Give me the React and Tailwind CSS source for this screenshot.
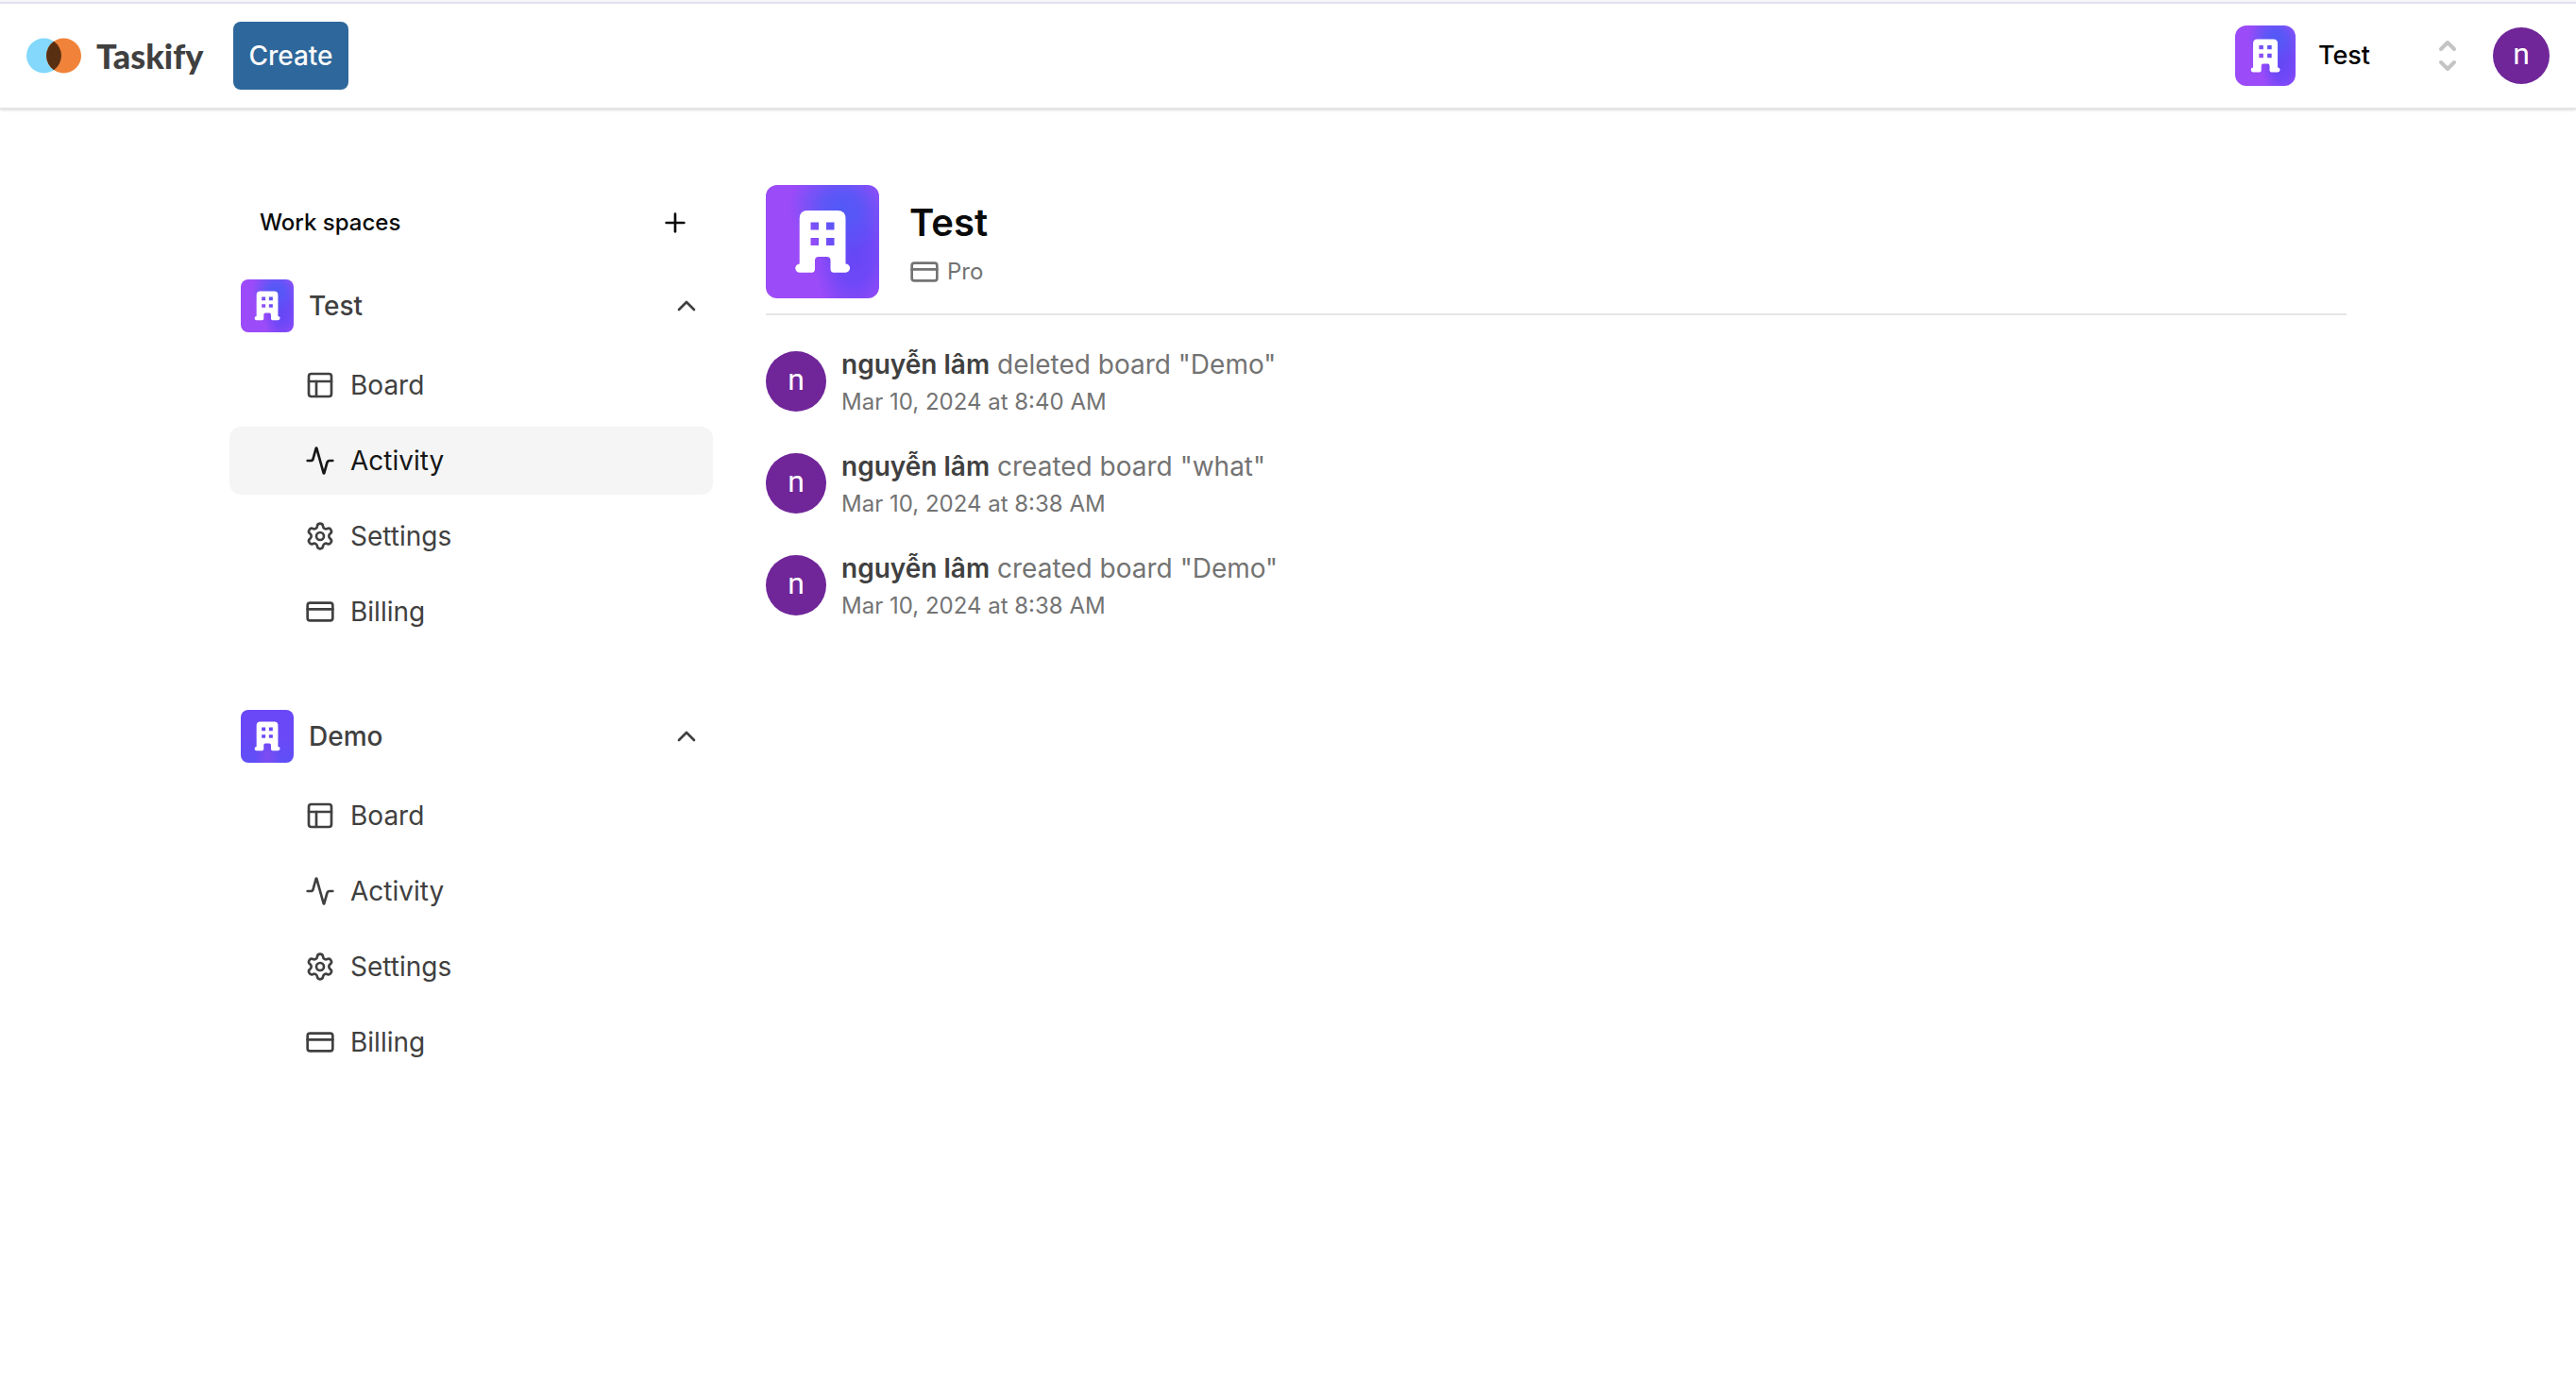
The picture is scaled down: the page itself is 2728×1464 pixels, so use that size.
import { Layout, Activity, Settings, CreditCard, Plus, ChevronUp } from "lucide-react";

const GRADIENTS = {
  Test: "bg-[radial-gradient(ellipse_45%_42%_at_66%_20%,#5159f6_0%,#5159f6cc_35%,#5159f600_100%),radial-gradient(ellipse_36%_60%_at_78%_60%,#6447f6_0%,#6447f6cc_45%,#6c47f600_100%),linear-gradient(#9b4bf8,#9b4bf8)]",
  Demo: "bg-[radial-gradient(ellipse_at_50%_90%,#7e4df2_0%,#7e4df200_35%),linear-gradient(180deg,#6a48f7_50%,#5f4ff7_100%)]",
};

function OrgLogo({ name, className }) {
  return (
    <span className={`block shrink-0 overflow-hidden ${GRADIENTS[name]} ${className}`}>
      <svg viewBox="0 0 120 120" className="size-full" fill="#fff" aria-hidden="true">
        <path
          fillRule="evenodd"
          d="M44 27H76Q84.500 27 84.500 35.500V83.500A4.600 4.600 0 0 1 84.500 92.700H72Q68.500 92.700 68.500 89V80Q68.500 76 64.500 76H56Q52 76 52 80V89Q52 92.700 48.500 92.700H36A4.600 4.600 0 0 1 35.700 83.500V35.500Q35.700 27 44 27ZM47.500 39.500V47.500H56V39.500ZM64 39.500V47.500H72.500V39.500ZM47.500 56V64H56V56ZM64 56V64H72.500V56Z"
        />
      </svg>
    </span>
  );
}

function Avatar({ className }) {
  return (
    <span
      className={`flex shrink-0 items-center justify-center rounded-full bg-[#702699] pb-1 font-[Roboto,sans-serif] text-[32px] leading-none text-white ${className}`}
    >
      n
    </span>
  );
}

const LINKS = [
  ["Board", Layout],
  ["Activity", Activity],
  ["Settings", Settings],
  ["Billing", CreditCard],
];

function Workspace({ name, active }) {
  return (
    <section>
      <button type="button" aria-expanded="true" className="flex h-[72px] w-full items-center gap-4 px-3 text-neutral-700">
        <OrgLogo name={name} className="size-14 rounded-lg" />
        <span className="grow text-left font-medium">{name}</span>
        <ChevronUp className="size-8" />
      </button>
      <ul className="flex flex-col gap-2 pt-3">
        {LINKS.map(([label, Icon]) => (
          <li key={label}>
            <a
              href="#"
              className={`flex h-[72px] items-center gap-4 rounded-xl pl-20 ${
                label === active ? "bg-neutral-100 text-neutral-900" : "text-neutral-700"
              }`}
            >
              <Icon className="size-8" />
              {label}
            </a>
          </li>
        ))}
      </ul>
    </section>
  );
}

const ENTRIES = [
  ['deleted board "Demo"', "Mar 10, 2024 at 8:40 AM"],
  ['created board "what"', "Mar 10, 2024 at 8:38 AM"],
  ['created board "Demo"', "Mar 10, 2024 at 8:38 AM"],
];

export default function App() {
  return (
    <div className="min-h-screen border-t-2 border-[#f8f5fb] bg-white font-[Inter,sans-serif] text-[28px] leading-10 text-neutral-950">
      <header className="flex h-[114px] items-center border-t-2 border-b-2 border-t-[#e3e1ee] border-b-neutral-200 px-7 shadow-sm">
        <a href="#" className="flex items-center gap-4 text-neutral-700">
          <svg viewBox="0 0 58 38" className="h-[38px] w-[58px]" aria-hidden="true">
            <circle cx="18.500" cy="19" r="18.500" fill="#83d8fb" />
            <circle cx="39.500" cy="19" r="18.500" fill="#f08239" />
            <path d="M29 3.800a18.500 18.500 0 0 1 0 30.400a18.500 18.500 0 0 1 0-30.400Z" fill="#592f12" />
          </svg>
          <span className="font-[Lato,sans-serif] text-4xl leading-10 font-black">Taskify</span>
        </a>
        <button type="button" className="ml-8 h-[72px] rounded-lg bg-[#2d679b] px-4 font-medium text-neutral-50">
          Create
        </button>
        <button type="button" className="ml-auto flex items-center text-[27px] font-medium text-black">
          <OrgLogo name="Test" className="size-16 rounded-xl" />
          <span className="ml-6">Test</span>
          <svg viewBox="0 0 20 34" className="ml-18 h-[34px] w-5" fill="none" stroke="#c4c4c4" strokeWidth="4" strokeLinecap="round" strokeLinejoin="round" aria-hidden="true">
            <path d="M3 10L10 3L17 10M3 24L10 31L17 24" />
          </svg>
        </button>
        <button type="button" aria-label="Account" className="ml-[38px]">
          <Avatar className="size-[60px]" />
        </button>
      </header>

      <div className="mx-auto flex max-w-[2242px] gap-14 pt-20">
        <aside className="w-[512px] shrink-0 pt-1">
          <div className="flex h-[72px] items-center justify-between pr-6 pl-8 text-2xl font-medium">
            Work spaces
            <button type="button" aria-label="Add workspace">
              <Plus className="size-8" />
            </button>
          </div>
          <nav className="flex flex-col gap-[60px] pt-4">
            <Workspace name="Test" active="Activity" />
            <Workspace name="Demo" />
          </nav>
        </aside>

        <main className="grow">
          <div className="flex items-center gap-8 border-b-2 border-neutral-200 pb-4">
            <OrgLogo name="Test" className="size-[120px] rounded-xl" />
            <div>
              <h1 className="text-[40px] leading-[56px] font-semibold">Test</h1>
              <p className="flex items-center gap-2 pt-2 text-2xl leading-8 text-neutral-500">
                <CreditCard className="size-8" />
                Pro
              </p>
            </div>
          </div>
          <ol className="flex flex-col gap-7 pt-8">
            {ENTRIES.map(([text, time], i) => (
              <li key={i} className="flex items-start gap-4 text-neutral-500">
                <Avatar className="mt-1.5 size-16" />
                <div>
                  <p>
                    <strong className="font-semibold text-neutral-700">nguyễn lâm</strong> {text}
                  </p>
                  <p className="text-2xl leading-10">{time}</p>
                </div>
              </li>
            ))}
          </ol>
        </main>
      </div>
    </div>
  );
}
